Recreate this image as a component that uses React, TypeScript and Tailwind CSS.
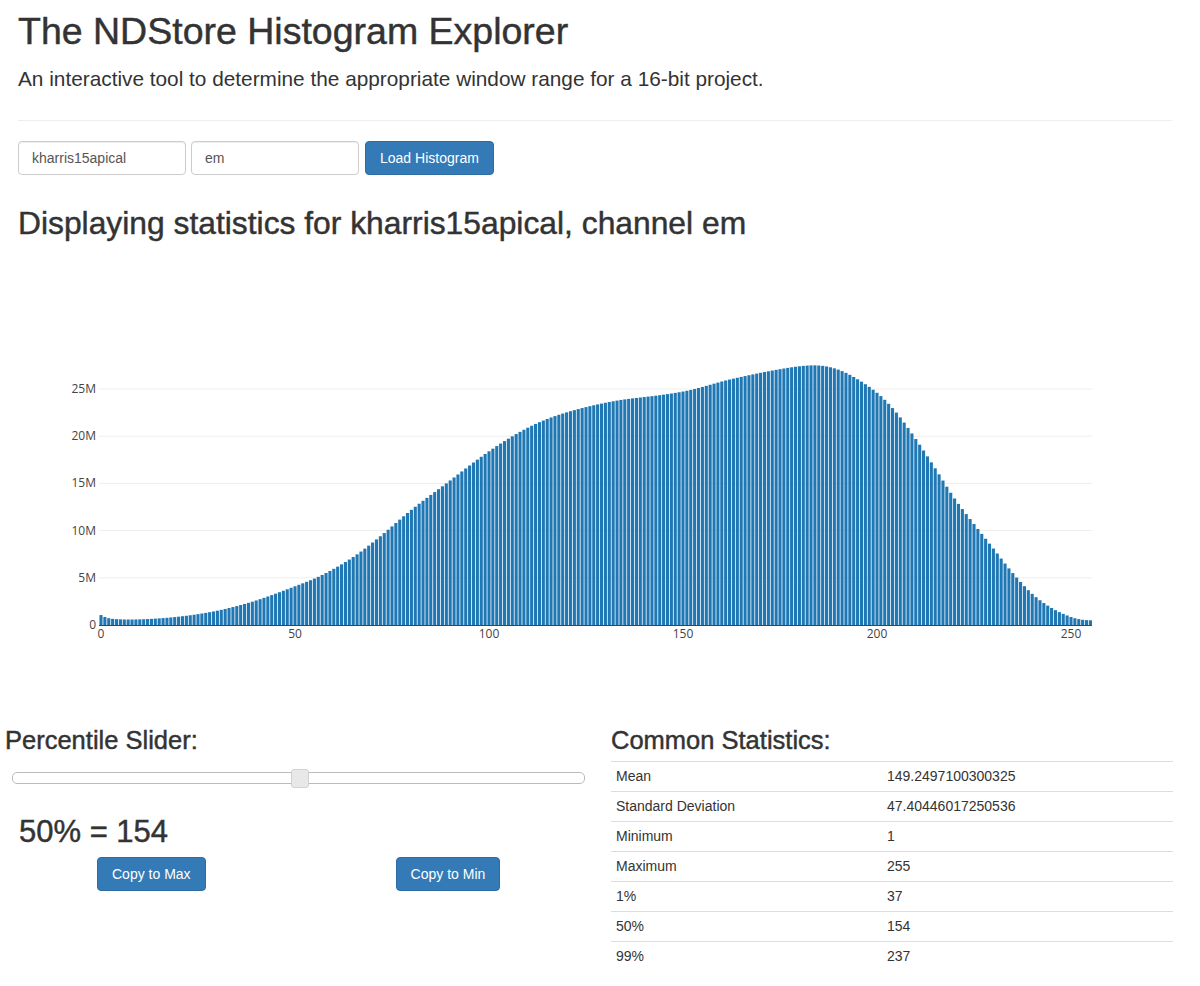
import React from 'react';

// anchor points read off the histogram (bin -> count in millions)
const anchors: [number, number][] = [
  [0, 1.05], [1, 0.85], [2, 0.72], [3, 0.65], [5, 0.6], [8, 0.58], [12, 0.63], [18, 0.8],
  [25, 1.15], [32, 1.7], [40, 2.6], [50, 4.1], [57, 5.3], [65, 7.2], [72, 9.4], [80, 12.2],
  [89, 15.0], [100, 18.4], [110, 20.9], [119, 22.4], [132, 23.7], [145, 24.4], [152, 24.9],
  [162, 26.0], [175, 27.1], [183, 27.5], [188, 27.3], [193, 26.5], [200, 24.6], [205, 22.5],
  [210, 19.7], [215, 16.6], [220, 13.4], [225, 10.7], [230, 8.1], [235, 5.5], [240, 3.3],
  [245, 1.8], [250, 0.85], [253, 0.55], [255, 0.5],
];

function slope(k: number) {
  const a = anchors[Math.max(0, k - 1)];
  const b = anchors[Math.min(anchors.length - 1, k + 1)];
  return (b[1] - a[1]) / (b[0] - a[0]);
}

function valueAt(x: number) {
  let k = 0;
  while (k < anchors.length - 2 && anchors[k + 1][0] < x) k++;
  const [x0, y0] = anchors[k];
  const [x1, y1] = anchors[k + 1];
  const h = x1 - x0;
  const t = (x - x0) / h;
  const m0 = slope(k) * h;
  const m1 = slope(k + 1) * h;
  const t2 = t * t;
  const t3 = t2 * t;
  return (2 * t3 - 3 * t2 + 1) * y0 + (t3 - 2 * t2 + t) * m0 + (-2 * t3 + 3 * t2) * y1 + (t3 - t2) * m1;
}

const bins = Array.from({ length: 256 }, (_, i) => valueAt(i));

// chart geometry, page coords shifted by the svg top (240)
const TOP = 240;
const X0 = 101;
const STEP = 3.88;
const ZERO = 624 - TOP;
const PER_M = 47.2 / 5;

const stats = [
  ['Mean', '149.2497100300325'],
  ['Standard Deviation', '47.40446017250536'],
  ['Minimum', '1'],
  ['Maximum', '255'],
  ['1%', '37'],
  ['50%', '154'],
  ['99%', '237'],
];

function Histogram() {
  const yTicks = [0, 5, 10, 15, 20, 25];
  const xTicks = [0, 50, 100, 150, 200, 250];
  return (
    <svg width={1200} height={460} className="block" style={{ fontFamily: '"Open Sans", "Liberation Sans", sans-serif' }}>
      {yTicks.slice(1).map((v) => (
        <line key={v} x1={99} x2={1092} y1={ZERO - v * PER_M} y2={ZERO - v * PER_M} stroke="#eeeeee" strokeWidth={1} />
      ))}
      {bins.map((v, i) => {
        const h = v * PER_M;
        return <rect key={i} x={X0 + STEP * i - 1.55} y={ZERO - h} width={3.1} height={h} fill="#1f77b4" />;
      })}
      <line x1={99} x2={1092} y1={ZERO + 0.5} y2={ZERO + 0.5} stroke="#444" strokeWidth={1} />
      {yTicks.map((v) => (
        <text key={v} x={96} y={ZERO - v * PER_M + 4} textAnchor="end" fontSize={12} fill="#444">
          {v === 0 ? '0' : `${v}M`}
        </text>
      ))}
      {xTicks.map((v) => (
        <text key={v} x={X0 + STEP * v} y={ZERO + 13} textAnchor="middle" fontSize={12} fill="#444">
          {v}
        </text>
      ))}
    </svg>
  );
}

const btn = 'h-[34px] px-[14px] text-[14px] text-white bg-[#337ab7] border border-[#2e6da4] rounded-[4px]';
const field =
  'w-[168px] h-[34px] px-[13px] text-[14px] text-[#555] border border-[#cccccc] rounded-[4px] shadow-[inset_0_1px_1px_rgba(0,0,0,0.075)] outline-none';
const heavy = '[-webkit-text-stroke:0.45px_#333333]';

export default function App() {
  return (
    <div className="bg-white text-[#333] font-['Liberation_Sans',Arial,sans-serif] w-[1200px] min-h-[986px]">
      <div className="pl-[18px] pr-[28px] pt-[11px]">
        <h1 className={`text-[37.5px] leading-[1.1] ${heavy}`}>The NDStore Histogram Explorer</h1>
        <p className="text-[20.8px] leading-[1.3] mt-[13px]">
          An interactive tool to determine the appropriate window range for a 16-bit project.
        </p>
        <hr className="mt-[28px] border-t border-[#eeeeee]" />
        <div className="flex items-center mt-[20px]">
          <input defaultValue="kharris15apical" className={field} />
          <input defaultValue="em" className={`ml-[5px] ${field}`} />
          <button className={`ml-[6px] ${btn} px-[13px]`}>Load Histogram</button>
        </div>
        <h2 className={`text-[31.8px] leading-[1.1] mt-[31px] ${heavy}`}>
          Displaying statistics for kharris15apical, channel em
        </h2>
      </div>

      <Histogram />

      <div className="grid grid-cols-[600px_600px] mt-[25px]">
        <div className="pl-[5px]">
          <h3 className={`text-[25.5px] leading-[1.1] ${heavy}`}>Percentile Slider:</h3>
          <div className="relative ml-[7px] mt-[18px] w-[573px] h-[12px] bg-white border border-[#bbbbbb] rounded-[5px]">
            <div className="absolute left-[278px] top-[-4px] w-[18px] h-[19px] bg-[#e8e8e8] border border-[#d3d3d3] rounded-[3px]" />
          </div>
          <div className={`ml-[14px] mt-[31px] text-[31px] leading-[1.1] ${heavy}`}>50% = 154</div>
          <div className="flex mt-[8px] pl-[92px]">
            <button className={btn}>Copy to Max</button>
            <button className={`ml-[190px] ${btn}`}>Copy to Min</button>
          </div>
        </div>
        <div className="pl-[11px]">
          <h3 className={`text-[25.5px] leading-[1.1] ${heavy}`}>Common Statistics:</h3>
          <table className="mt-[7px] w-[562px] text-[14px] leading-[19px] border-collapse">
            <tbody>
              {stats.map(([k, v]) => (
                <tr key={k} className="border-t border-[#dddddd]">
                  <td className="w-[271px] px-[5px] py-[5px]">{k}</td>
                  <td className="px-[5px] py-[5px]">{v}</td>
                </tr>
              ))}
            </tbody>
          </table>
        </div>
      </div>
    </div>
  );
}
